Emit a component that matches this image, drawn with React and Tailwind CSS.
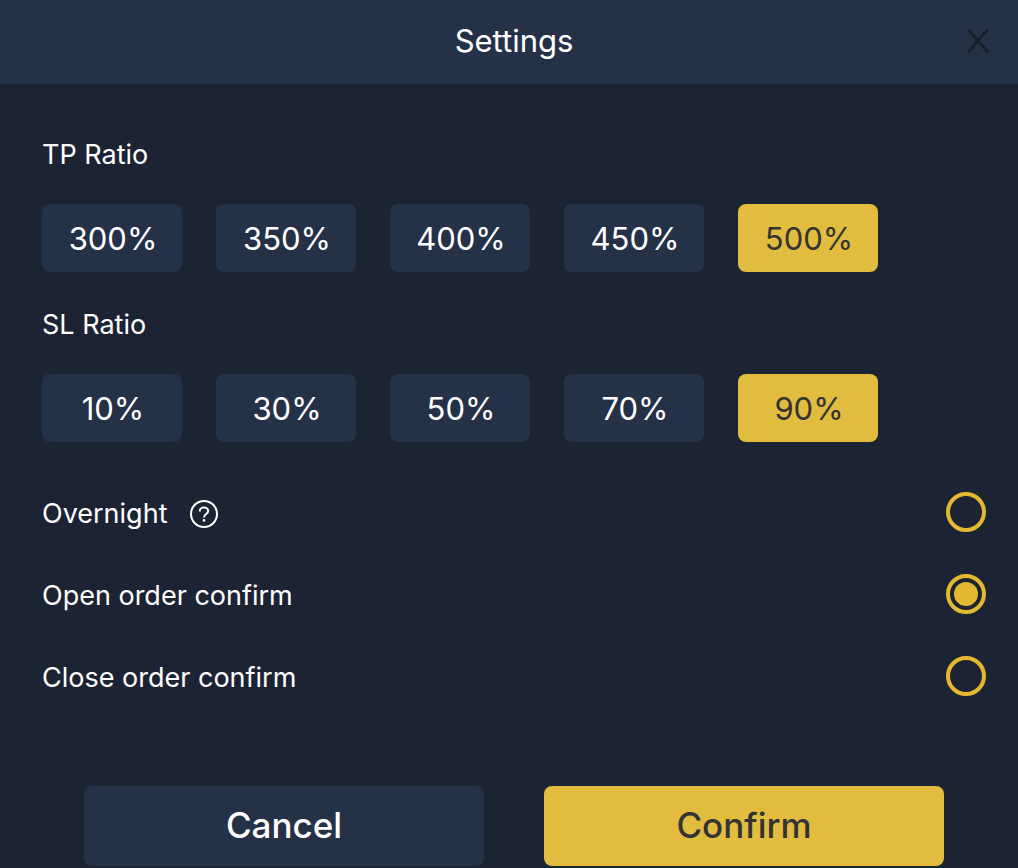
import { useState } from "react";

const tpOptions = ["300%", "350%", "400%", "450%", "500%"];
const slOptions = ["10%", "30%", "50%", "70%", "90%"];

function RatioGroup({ title, options, value, onChange }) {
    return (
        <section>
            <h2 className="text-[27px] leading-[34px]">{title}</h2>
            <div className="mt-8 flex flex-wrap gap-[34px]">
                {options.map((option) => (
                    <button
                        key={option}
                        type="button"
                        aria-pressed={option === value}
                        onClick={() => onChange(option)}
                        className={`h-[68px] w-[140px] rounded-lg pt-0.5 pl-0.5 text-[31px] leading-10 ${
                            option === value ? "bg-[#e1bc3f] text-[#333333]" : "bg-[#253147] text-white"
                        }`}
                    >
                        {option}
                    </button>
                ))}
            </div>
        </section>
    );
}

function ToggleRow({ id, label, checked, onChange, help }) {
    return (
        <div className="flex h-10 items-center justify-between">
            <div className="flex items-center gap-[22px] pt-1">
                <label htmlFor={id} className="text-[27px] leading-[34px]">
                    {label}
                </label>
                {help && (
                    <button type="button" aria-label={`About ${label}`}>
                        <svg className="size-[30px]" viewBox="0 0 30 30" fill="none" stroke="currentColor" strokeWidth="2">
                            <circle cx="15" cy="15" r="13" />
                            <path d="M10.8 12.6V12a4.2 3.4 0 0 1 8.4 0c0 3-4.2 3-4.2 6.4" />
                            <path d="M15 20.2v2.4" strokeWidth="2.4" />
                        </svg>
                    </button>
                )}
            </div>
            <input
                id={id}
                type="radio"
                checked={checked}
                onClick={() => onChange(!checked)}
                readOnly
                className="size-10 appearance-none rounded-full border-4 border-[#e3b92f] bg-clip-content p-1 checked:bg-[#e3b92f]"
            />
        </div>
    );
}

export default function App() {
    const [tp, setTp] = useState("500%");
    const [sl, setSl] = useState("90%");
    const [overnight, setOvernight] = useState(false);
    const [openConfirm, setOpenConfirm] = useState(true);
    const [closeConfirm, setCloseConfirm] = useState(false);

    return (
        <div className="min-h-screen bg-[#1c2434] font-['Inter',sans-serif] text-white">
            <header className="grid h-[84px] grid-cols-[1fr_auto_1fr] items-center bg-[#253147] pr-7 pb-0.5 pl-[38px]">
                <h1 className="col-start-2 text-[31px] leading-10">Settings</h1>
                <button type="button" aria-label="Close" className="justify-self-end text-[#181f2b]">
                    <svg className="size-6" viewBox="0 0 24 24" fill="none" stroke="currentColor" strokeWidth="2.8">
                        <path d="M2 0 22 23.5M22 0 2 23.5" />
                    </svg>
                </button>
            </header>

            <main className="pt-[54px] pr-8 pl-[42px]">
                <div className="flex flex-col gap-9">
                    <RatioGroup title="TP Ratio" options={tpOptions} value={tp} onChange={setTp} />
                    <RatioGroup title="SL Ratio" options={slOptions} value={sl} onChange={setSl} />
                </div>
                <div className="mt-[50px] flex flex-col gap-[42px]">
                    <ToggleRow id="overnight" label="Overnight" checked={overnight} onChange={setOvernight} help />
                    <ToggleRow id="open-confirm" label="Open order confirm" checked={openConfirm} onChange={setOpenConfirm} />
                    <ToggleRow id="close-confirm" label="Close order confirm" checked={closeConfirm} onChange={setCloseConfirm} />
                </div>
            </main>

            <footer className="mt-[90px] flex gap-[60px] pr-[74px] pb-0.5 pl-[84px]">
                <button type="button" className="h-20 flex-1 rounded-lg bg-[#253147] pb-0.5 text-[35px] leading-10 font-medium">
                    Cancel
                </button>
                <button type="button" className="h-20 flex-1 rounded-lg bg-[#e1bc3f] pb-0.5 text-[35px] leading-10 font-medium text-[#333333]">
                    Confirm
                </button>
            </footer>
        </div>
    );
}
